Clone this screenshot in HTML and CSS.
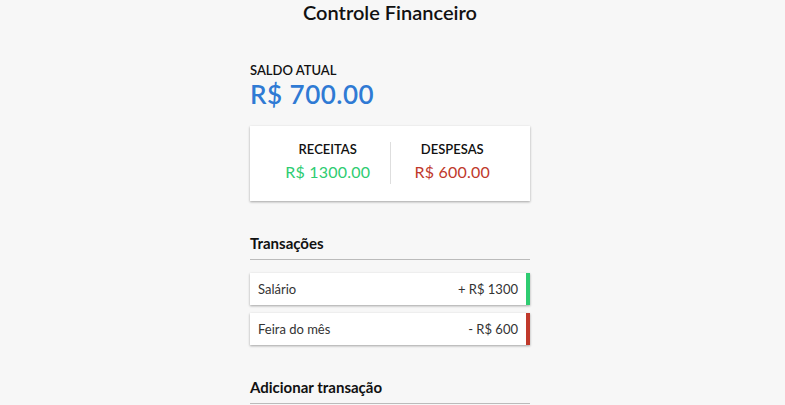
FILE: index.html
```html
<!DOCTYPE html>
<html lang="pt-BR">
<head>
<meta charset="UTF-8">
<title>Controle Financeiro</title>
<link rel="stylesheet" href="styles.css">
</head>
<body>
  <h2 class="title">Controle Financeiro</h2>
  <div class="container">
    <h4 class="label">Saldo atual</h4>
    <h1 class="balance">R$ 700.00</h1>

    <div class="inc-exp">
      <div class="col">
        <h4 class="label">Receitas</h4>
        <p class="money plus">R$ 1300.00</p>
      </div>
      <div class="col">
        <h4 class="label">Despesas</h4>
        <p class="money minus">R$ 600.00</p>
      </div>
    </div>

    <h3 class="section">Transações</h3>
    <ul class="list">
      <li class="item plus">Salário <span>+ R$ 1300</span></li>
      <li class="item minus">Feira do mês <span>- R$ 600</span></li>
    </ul>

    <h3 class="section">Adicionar transação</h3>
  </div>
</body>
</html>
```

FILE: styles.css
```css
* { box-sizing: border-box; }

body {
  margin: 0;
  padding: 0 5px 0 0;
  background-color: #f7f7f7;
  font-family: "Lato", "Liberation Sans", sans-serif;
  display: flex;
  flex-direction: column;
  align-items: center;
}

.title {
  margin: 0;
  font-size: 20px;
  font-weight: 600;
  line-height: 1.2;
  color: #111;
}

.container {
  width: 280px;
  margin-top: 39px;
}

.label {
  margin: 0;
  font-size: 13px;
  font-weight: 600;
  line-height: 1.2;
  text-transform: uppercase;
  color: #111;
}

.balance {
  margin: 0;
  font-size: 26px;
  font-weight: 600;
  line-height: 1.2;
  letter-spacing: 0.5px;
  color: #2f7ad4;
}

.inc-exp {
  display: flex;
  margin-top: 16px;
  padding: 16px 16px 17px;
  background-color: #fff;
  box-shadow: 0 1px 3px rgba(0, 0, 0, 0.12), 0 1px 2px rgba(0, 0, 0, 0.24);
}

.col {
  flex: 1;
  text-align: center;
}

.col:first-child {
  border-right: 1px solid #dedede;
}

.money {
  margin: 5px 0 2px;
  font-size: 16px;
  line-height: 1.2;
  letter-spacing: 0.2px;
}

.money.plus { color: #2ecc71; }
.money.minus { color: #c0392b; }

.section {
  margin: 33px 0 0;
  padding-bottom: 7px;
  border-bottom: 1px solid #bbb;
  font-size: 15px;
  font-weight: 700;
  line-height: 1.2;
  color: #111;
}

.list {
  list-style: none;
  margin: 13px 0 0;
  padding: 0;
  display: flex;
  flex-direction: column;
  gap: 8px;
}

.item {
  display: flex;
  justify-content: space-between;
  padding: 8px;
  font-size: 13px;
  line-height: 16px;
  color: #333;
  background-color: #fff;
  box-shadow: 0 1px 3px rgba(0, 0, 0, 0.12), 0 1px 2px rgba(0, 0, 0, 0.24);
}

.item.plus { border-right: 4px solid #2ecc71; }
.item.minus { border-right: 4px solid #c0392b; }
```
